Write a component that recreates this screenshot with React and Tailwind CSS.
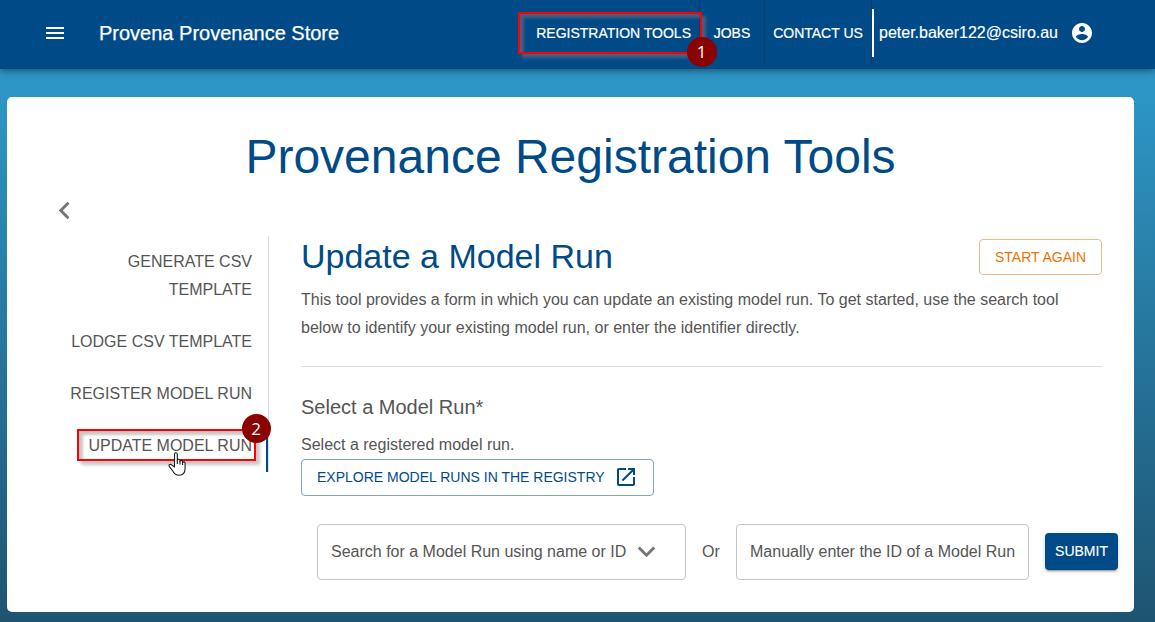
import React from "react";

function Icon({ d, className }) {
  return (
    <svg viewBox="0 0 24 24" fill="currentColor" className={className} aria-hidden="true">
      <path d={d} />
    </svg>
  );
}

const MENU = "M3 18h18v-2H3v2zm0-5h18v-2H3v2zm0-7v2h18V6H3z";
const ACCOUNT =
  "M12 2C6.48 2 2 6.48 2 12s4.48 10 10 10 10-4.48 10-10S17.52 2 12 2zm0 3c1.66 0 3 1.34 3 3s-1.34 3-3 3-3-1.34-3-3 1.34-3 3-3zm0 14.2c-2.5 0-4.71-1.28-6-3.22.03-1.99 4-3.08 6-3.08 1.99 0 5.97 1.09 6 3.08-1.29 1.94-3.5 3.22-6 3.22z";
const LEFT = "M15.41 7.41 14 6l-6 6 6 6 1.41-1.41L10.83 12z";
const DOWN = "M16.59 8.59 12 13.17 7.41 8.59 6 10l6 6 6-6z";
const LAUNCH =
  "M19 19H5V5h7V3H5c-1.11 0-2 .9-2 2v14c0 1.1.89 2 2 2h14c1.1 0 2-.9 2-2v-7h-2v7zM14 3v2h3.59l-9.83 9.83 1.41 1.41L19 6.41V10h2V3h-7z";

function Header() {
  return (
    <header className="relative z-10 flex h-[69px] items-center bg-[#004b87] text-white shadow-[0_2px_4px_-1px_rgba(0,0,0,0.2),0_4px_5px_rgba(0,0,0,0.14),0_1px_10px_rgba(0,0,0,0.12)]">
      <Icon d={MENU} className="ml-[43px] h-6 w-6 -mt-[3px]" />
      <div className="ml-8 -mt-[3px] text-[20px] whitespace-nowrap [-webkit-text-stroke:0.25px_white]">Provena Provenance Store</div>
      <nav className="ml-auto flex h-full w-[628px] items-start text-[14px]">
        <div className="relative flex h-[65px] w-[173px] items-center justify-end border-r border-[#07406f] pt-px pr-2 whitespace-nowrap">
          <span className="[-webkit-text-stroke:0.2px_white]">REGISTRATION TOOLS</span>
          <div className="absolute top-[12px] left-[-9px] h-[42px] w-[184px] border-2 border-[#ff0000] shadow-[4px_4px_3px_rgba(125,105,125,0.6),inset_4px_4px_3px_rgba(125,105,125,0.6)]" />
          <div className="absolute top-[37px] left-[160px] flex h-[30px] w-[30px] items-center justify-center rounded-full bg-[#8b0000] pr-px font-['Open_Sans',sans-serif] text-[17px]">1</div>
        </div>
        <div className="flex h-[65px] w-[65px] items-center justify-center border-r border-[#07406f] pt-px [-webkit-text-stroke:0.2px_white]">JOBS</div>
        <div className="flex h-[65px] w-[107px] items-center justify-center border-r border-[#07406f] pt-px whitespace-nowrap [-webkit-text-stroke:0.2px_white]">CONTACT US</div>
        <div className="mt-[9px] flex h-12 items-center border-l-2 border-white pl-[5px] text-[16px]">
          <span className="w-[179px] whitespace-nowrap [-webkit-text-stroke:0.15px_white]">peter.baker122@csiro.au</span>
          <Icon d={ACCOUNT} className="ml-3 h-6 w-6" />
        </div>
      </nav>
    </header>
  );
}

function Sidebar() {
  return (
    <aside className="relative flex h-[236px] w-[230px] flex-col border-r border-[#dedede] text-right text-[16px] leading-7">
      <div className="pt-[11.5px] pr-4 pb-[12.5px] pl-16">GENERATE CSV TEMPLATE</div>
      <div className="py-3 pr-4">LODGE CSV TEMPLATE</div>
      <div className="py-3 pr-4">REGISTER MODEL RUN</div>
      <div className="relative border-r-2 border-[#004b87] py-3 pr-[14px]">
        UPDATE MODEL RUN
        <div className="absolute top-[9px] left-[38px] h-[32px] w-[179px] border-2 border-[#ff0000] shadow-[4px_4px_3px_rgba(0,0,0,0.22),inset_4px_4px_3px_rgba(0,0,0,0.22)]" />
        <div className="absolute top-[-6px] left-[203px] flex h-[29px] w-[29px] items-center justify-center rounded-full bg-[#8b0000] pr-px font-['Open_Sans',sans-serif] text-[17px] text-white">2</div>
        <svg viewBox="0 0 18 24" className="absolute top-[32px] left-[129px] h-6 w-[18px]" fill="white" stroke="#1c1c28" strokeWidth="1.1" strokeLinejoin="round" aria-hidden="true">
          <path d="M6.5 15V2.2C6.5.2 9.3.2 9.3 2.2v6c.2-1.4 2.7-1.3 2.7.5v.5c.4-1.3 2.6-1.1 2.6.6v.7c.6-1.1 2.5-.8 2.5.8v5c0 4-2.1 6.9-6 6.9-3.5 0-5-1.5-6.3-4.2L1.2 14.3c-.7-1.5 1.2-2.6 2.4-1.4z" />
          <path d="M9.3 8v4M12 9v3.5M14.6 10v3" />
        </svg>
      </div>
    </aside>
  );
}

function UpdateForm() {
  return (
    <main className="ml-8 w-[801px] text-[16px]">
      <div className="flex h-[50px] items-start justify-between">
        <h2 className="text-[34px] leading-[40px] text-[#004b87]">Update a Model Run</h2>
        <button className="mt-[3px] h-9 w-[123px] rounded border border-[#f9b57f] text-[14px] whitespace-nowrap text-[#ee7203]">START AGAIN</button>
      </div>
      <p className="leading-7">
        This tool provides a form in which you can update an existing model run. To get started, use the search tool
        <br />
        below to identify your existing model run, or enter the identifier directly.
      </p>
      <hr className="mt-6 border-[#dedede]" />
      <h3 className="mt-6 text-[20px] leading-8">Select a Model Run*</h3>
      <p className="mt-2 leading-7">Select a registered model run.</p>
      <button className="flex h-[37px] w-[353px] items-center rounded border border-[#7fa5c3] pl-[15px] text-[14px] whitespace-nowrap text-[#004b87]">
        EXPLORE MODEL RUNS IN THE REGISTRY
        <Icon d={LAUNCH} className="-mt-px ml-[9px] h-6 w-6" />
      </button>
      <div className="mt-7 ml-4 flex w-[801px] items-center">
        <div className="flex h-14 w-[369px] items-center rounded border border-[#c4c4c4] pl-[13px] whitespace-nowrap">
          Search for a Model Run using name or ID
          <Icon d={DOWN} className="-mt-px ml-[3px] h-[35px] w-[35px] text-[#757575]" />
        </div>
        <span className="w-[50px] text-center">Or</span>
        <div className="flex h-14 w-[293px] items-center rounded border border-[#c4c4c4] pl-[13px] whitespace-nowrap">Manually enter the ID of a Model Run</div>
        <button className="-mt-px ml-4 h-[37px] w-[73px] rounded bg-[#004b87] text-[14px] text-white shadow-[0_3px_1px_-2px_rgba(0,0,0,0.2),0_2px_2px_rgba(0,0,0,0.14),0_1px_5px_rgba(0,0,0,0.12)] [-webkit-text-stroke:0.15px_white]">SUBMIT</button>
      </div>
    </main>
  );
}

export default function App() {
  return (
    <div className="h-[622px] w-[1155px] overflow-hidden bg-linear-to-b from-[#2d96c5] from-15% to-[#1e5472] font-['Liberation_Sans',Arial,sans-serif] text-[#555]">
      <Header />
      <section className="mt-7 ml-[7px] h-[515px] w-[1127px] rounded-[5px] bg-white">
        <h1 className="pt-8 text-center text-[48px] leading-[56px] text-[#004b87]">Provenance Registration Tools</h1>
        <Icon d={LEFT} className="mt-2 ml-[40px] h-[35px] w-[35px] text-[#757575]" />
        <div className="mt-[8px] ml-8 flex">
          <Sidebar />
          <UpdateForm />
        </div>
      </section>
    </div>
  );
}
